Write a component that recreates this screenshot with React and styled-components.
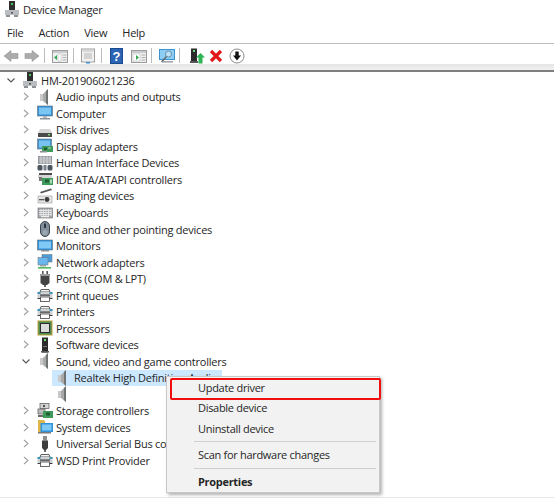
import React from 'react';
import styled, { createGlobalStyle } from 'styled-components';

const GlobalStyle = createGlobalStyle`
  html, body { margin: 0; padding: 0; background: #fff; }
  body { font-family: "Open Sans", "Noto Sans", "Liberation Sans", sans-serif; color: #262626; }
`;

const Window = styled.div`
  position: relative;
  width: 554px;
  height: 499px;
  overflow: hidden;
  background: #fff;
`;
const TitleBar = styled.div`
  height: 18px;
  display: flex;
  align-items: center;
  padding-left: 4px;
  font-size: 11.2px;
  letter-spacing: -0.3px;
`;
const MenuBar = styled.div`
  height: 21px;
  padding-top: 4px;
  display: flex;
  align-items: center;
  padding-left: 7px;
  gap: 15px;
  font-size: 11px;
  letter-spacing: -0.25px;
  border-bottom: 1px solid #bdbdbd;
`;
const Toolbar = styled.div`
  height: 20px;
  display: flex;
  align-items: center;
  padding-top: 3px;
  box-sizing: border-box;
`;
const ToolButton = styled.div`
  width: ${p => p.$w || 21}px;
  margin-left: ${p => p.$ml || 0}px;
  display: flex;
  justify-content: center;
  flex: none;
`;
const ToolSep = styled.div`
  width: 1px;
  height: 15px;
  background: #bcbcbc;
  margin-left: ${p => p.$ml || 0}px;
  flex: none;
`;
const ToolShade = styled.div`
  height: 6px;
  background: linear-gradient(#e4e4e4, #f2f2f2);
  border-bottom: 2px solid #7f7f7f;
`;
const Row = styled.div`
  height: 16.545px;
  display: flex;
  align-items: center;
  padding-left: ${p => p.$indent}px;
  font-size: 11px;
  letter-spacing: -0.23px;
  white-space: nowrap;
`;
const Chevron = styled.svg`
  width: 8px;
  height: 9px;
  margin-right: 7px;
  flex: none;
`;
const IconSlot = styled.span`
  width: 16px;
  height: 16px;
  margin-right: 3px;
  flex: none;
  display: block;
  svg { display: block; }
`;
const SelectedRow = styled(Row)`
  position: relative;
  &::before {
    content: "";
    position: absolute;
    left: 52px;
    width: 170px;
    top: 0;
    bottom: 0;
    background: #cce8ff;
  }
  & > * { position: relative; }
`;
const BottomEdge = styled.div`
  position: absolute;
  left: 0;
  right: 0;
  bottom: 1px;
  height: 1px;
  background: #e6e6e6;
`;
const ContextMenu = styled.div`
  position: absolute;
  left: 166px;
  top: 376px;
  width: 214px;
  height: 117px;
  box-sizing: border-box;
  background: #f2f2f2;
  border: 1px solid #c8c8c8;
  box-shadow: 2px 2px 3px rgba(0, 0, 0, 0.3);
  font-size: 11px;
  letter-spacing: -0.3px;
`;
const MenuItem = styled.div`
  height: ${p => p.$h || 20.5}px;
  display: flex;
  align-items: center;
  padding-left: 31px;
  font-weight: ${p => (p.$bold ? 700 : 400)};
`;
const MenuSep = styled.div`
  height: 1px;
  margin: ${p => p.$m};
  background: #cfcfcf;
`;
const Highlight = styled.div`
  position: absolute;
  left: 3px;
  top: 1px;
  width: 211px;
  height: 22px;
  box-sizing: border-box;
  border: 2px solid #f00f0f;
  border-radius: 2px;
`;

const Svg = ({ children, w = 16, h = 16 }) => (
  <svg width={w} height={h} viewBox={`0 0 ${w} ${h}`}>{children}</svg>
);

const icons = {
  manager: (
    <Svg>
      <rect x="5" y="0" width="6" height="9" fill="#2f2f2f" />
      <rect x="7" y="2" width="2" height="2" fill="#45c45a" />
      <rect x="1" y="9" width="14" height="5" fill="#b9bcc0" />
      <rect x="2" y="14" width="4" height="2" fill="#8d9094" />
      <rect x="10" y="14" width="4" height="2" fill="#8d9094" />
      <rect x="7" y="11" width="2" height="1.5" fill="#555" />
    </Svg>
  ),
  audio: (
    <Svg>
      <rect x="3" y="5" width="3" height="7" fill="#c9c9c9" />
      <path d="M6 5 L11 0 V16 L6 12 Z" fill="#a9a9a9" />
      <path d="M9 2 L11 0 V16 L9 14 Z" fill="#6f7374" />
    </Svg>
  ),
  computer: (
    <Svg>
      <rect x="0.5" y="1" width="15" height="10" fill="#2f8fd8" stroke="#6a6f74" strokeWidth="0.6" />
      <rect x="2" y="2.5" width="12" height="7" fill="#7cc6f4" />
      <rect x="6" y="11" width="4" height="2" fill="#b5b8bb" />
      <rect x="3" y="13" width="10" height="1.5" fill="#8e9195" />
    </Svg>
  ),
  disk: (
    <Svg>
      <path d="M3 7 H13 L15 11 H1 Z" fill="#d4d4d4" />
      <rect x="1" y="11" width="14" height="4" fill="#4a4a4a" />
      <rect x="11" y="12" width="2" height="1.5" fill="#7bd67f" />
    </Svg>
  ),
  display: (
    <Svg>
      <rect x="0.5" y="1" width="14" height="10" fill="#3c95d8" stroke="#6a6f74" strokeWidth="0.6" />
      <rect x="2" y="2.5" width="11" height="7" fill="#79c2ef" />
      <rect x="5" y="8" width="11" height="6" fill="#3f9a5b" />
      <rect x="7" y="9.5" width="3" height="2.5" fill="#1e5f34" />
      <rect x="11" y="9.5" width="3" height="1" fill="#a9dcb5" />
      <rect x="3" y="13" width="7" height="1.5" fill="#8e9195" />
    </Svg>
  ),
  hid: (
    <Svg>
      <rect x="1" y="1" width="14" height="8" fill="#8f959b" />
      <path d="M2 3h12M2 5h12M2 7h12M4 1v8M7 1v8M10 1v8M13 1v8" stroke="#e8e8e8" strokeWidth="0.7" />
      <rect x="0.5" y="10" width="5" height="5.5" rx="1.5" fill="#4c5660" />
      <rect x="10.5" y="10" width="5" height="5.5" rx="1.5" fill="#4c5660" />
      <rect x="6.5" y="10" width="3" height="5.5" fill="#7b8289" />
    </Svg>
  ),
  ide: (
    <Svg>
      <rect x="2" y="2" width="13" height="5" fill="#4d4d4d" />
      <rect x="1" y="4" width="14" height="3" fill="#d5d5d5" />
      <rect x="5" y="7" width="11" height="7" fill="#3f9a5b" />
      <rect x="8" y="8.5" width="4" height="3" fill="#1e5f34" />
      <rect x="13" y="8.5" width="2" height="4" fill="#a9dcb5" />
      <rect x="2" y="6" width="3" height="4" fill="#777" />
    </Svg>
  ),
  imaging: (
    <Svg>
      <path d="M3 4 L14 0.5 L15 2 L4 5.5 Z" fill="#555" />
      <rect x="1" y="8" width="14" height="7" fill="#e4e4e4" stroke="#9a9a9a" strokeWidth="0.6" />
      <circle cx="10" cy="11.5" r="2.4" fill="#3a3a3a" />
      <rect x="2" y="11" width="5" height="1.3" fill="#555" />
    </Svg>
  ),
  keyboard: (
    <Svg>
      <rect x="1" y="3" width="14.5" height="10" fill="#a5a9ad" stroke="#6c6c6c" strokeWidth="0.6" />
      <path d="M2 5.5h12.5M2 7.5h12.5M2 9.5h12.5M4 4v7M6.5 4v7M9 4v7M11.5 4v7M14 4v7" stroke="#ededed" strokeWidth="0.8" />
      <rect x="4" y="10.8" width="8" height="1.4" fill="#eee" />
    </Svg>
  ),
  mouse: (
    <Svg>
      <rect x="3.5" y="0.5" width="9" height="15" rx="4.5" fill="#7f8e9a" stroke="#3f474e" />
      <rect x="7" y="2.5" width="2" height="4.5" fill="#2f383f" />
      <rect x="5.5" y="9" width="5" height="5" rx="2" fill="#9aa8b2" />
    </Svg>
  ),
  monitor: (
    <Svg>
      <rect x="0.5" y="2" width="15" height="10" fill="#2f8fd8" stroke="#6a6f74" strokeWidth="0.6" />
      <rect x="2" y="3.5" width="12" height="7" fill="#82caf6" />
      <rect x="4" y="12" width="8" height="1.5" fill="#8e9195" />
    </Svg>
  ),
  network: (
    <Svg>
      <rect x="5" y="0.5" width="10" height="7.5" fill="#4c9edb" stroke="#6a6f74" strokeWidth="0.5" />
      <rect x="1" y="3.5" width="10" height="7.5" fill="#69b7ec" stroke="#6a6f74" strokeWidth="0.5" />
      <rect x="3" y="11" width="6" height="1.5" fill="#9ea2a6" />
      <rect x="1" y="13" width="13" height="1.6" fill="#53b85f" />
    </Svg>
  ),
  ports: (
    <Svg>
      <rect x="5" y="0" width="1.6" height="3" fill="#555" />
      <rect x="9.4" y="0" width="1.6" height="3" fill="#555" />
      <rect x="3" y="3" width="10" height="2" fill="#9a9a9a" />
      <path d="M3.5 5 H12.5 V12 L10 14 H6 L3.5 12 Z" fill="#444" />
      <rect x="7" y="14" width="2" height="2" fill="#666" />
    </Svg>
  ),
  printer: (
    <Svg>
      <path d="M4 2.5 H12 L13 5 H3 Z" fill="#f4f4f4" stroke="#3b3b3b" strokeWidth="0.8" />
      <rect x="0.5" y="5" width="15" height="6" fill="#cfd3d6" />
      <rect x="0.5" y="5" width="3" height="2" fill="#3f95b5" />
      <rect x="12.5" y="5" width="3" height="2" fill="#3f95b5" />
      <rect x="3" y="7.5" width="10" height="1.2" fill="#3c3c3c" />
      <rect x="0.5" y="11" width="15" height="1" fill="#3c3c3c" />
      <rect x="3.5" y="10" width="9" height="4.5" fill="#fff" stroke="#444" strokeWidth="0.8" />
    </Svg>
  ),
  processor: (
    <Svg>
      <rect x="1" y="1" width="14" height="14" fill="#4f8a52" stroke="#b8a33c" strokeWidth="1" />
      <rect x="3.5" y="3.5" width="9" height="9" fill="#dcdcdc" stroke="#2d2d2d" strokeWidth="1" />
    </Svg>
  ),
  software: (
    <Svg>
      <rect x="5" y="0.5" width="6" height="15" fill="#2b2b2b" />
      <rect x="7" y="2" width="2" height="2" fill="#6fdc7a" />
      <rect x="6" y="9" width="4" height="1" fill="#777" />
      <rect x="4" y="14" width="8" height="1.5" fill="#555" />
    </Svg>
  ),
  storage: (
    <Svg>
      <rect x="3" y="0.5" width="9" height="5" fill="#d5d5d5" stroke="#555" strokeWidth="0.7" />
      <circle cx="7" cy="3" r="1.2" fill="#555" />
      <rect x="1" y="6" width="7" height="5" fill="#bcbcbc" stroke="#555" strokeWidth="0.7" />
      <rect x="6" y="8" width="10" height="7" fill="#3f9a5b" />
      <rect x="9" y="9.5" width="4" height="3" fill="#1e5f34" />
      <rect x="1" y="12" width="5" height="2" fill="#6b6b6b" />
    </Svg>
  ),
  system: (
    <Svg>
      <path d="M1 1 H7 L8.5 3 H8 V14 H1 Z" fill="#e0b64a" />
      <rect x="3.5" y="4" width="12.5" height="9" fill="#2f93dc" />
      <rect x="5" y="5.5" width="9.5" height="6" fill="#7dc8f5" />
      <rect x="1" y="13" width="13" height="1.5" fill="#77797c" />
    </Svg>
  ),
  usb: (
    <Svg>
      <rect x="6" y="0" width="4" height="4.5" fill="#8f8f8f" />
      <path d="M5 4.5 H11 V12 L9 14 H7 L5 12 Z" fill="#3d3d3d" />
      <rect x="7.2" y="14" width="1.6" height="2" fill="#444" />
    </Svg>
  ),
  back: (
    <Svg>
      <path d="M1 8 L8 2.5 V5.5 H15 V10.5 H8 V13.5 Z" fill="#ababab" stroke="#949494" strokeWidth="0.6" />
    </Svg>
  ),
  forward: (
    <Svg>
      <path d="M15 8 L8 2.5 V5.5 H1 V10.5 H8 V13.5 Z" fill="#ababab" stroke="#949494" strokeWidth="0.6" />
    </Svg>
  ),
  tree: (
    <Svg>
      <rect x="0.5" y="2.5" width="15" height="12" fill="#eef0f1" stroke="#9c9c9c" />
      <rect x="1" y="3" width="14" height="2" fill="#c8cbce" />
      <rect x="6" y="6" width="3" height="7" fill="#fff" stroke="#b5b5b5" strokeWidth="0.5" />
      <path d="M2 9.5 L5 7 V12 Z" fill="#2fa84f" />
      <rect x="10.5" y="6.5" width="4" height="1" fill="#b0b0b0" />
      <rect x="10.5" y="9" width="4" height="1" fill="#b0b0b0" />
      <rect x="10.5" y="11.5" width="4" height="1" fill="#b0b0b0" />
    </Svg>
  ),
  props: (
    <Svg>
      <rect x="1.5" y="1" width="13" height="13" fill="#f1f1f1" stroke="#9f9f9f" />
      <rect x="2.5" y="2" width="11" height="2" fill="#d8d8d8" />
      <path d="M4 6h8M4 8h8M4 10h8" stroke="#b4b4b4" />
      <rect x="6" y="14" width="4" height="1.5" fill="#3e8fd0" />
    </Svg>
  ),
  help: (
    <svg width="16" height="16" viewBox="0 0 16 16">
      <rect x="1.5" y="0.5" width="12" height="15" fill="#2b63b5" stroke="#1b4a8c" />
      <text x="7.5" y="13" textAnchor="middle" fontFamily="Liberation Sans" fontWeight="700" fontSize="13" fill="#fff">?</text>
    </svg>
  ),
  panel: (
    <Svg>
      <rect x="0.5" y="2.5" width="15" height="12" fill="#eef0f1" stroke="#9c9c9c" />
      <rect x="1" y="3" width="14" height="2" fill="#c8cbce" />
      <rect x="2" y="6" width="7" height="7" fill="#fff" stroke="#b5b5b5" strokeWidth="0.5" />
      <path d="M5 7 L8 9.5 L5 12 Z" fill="#2fa84f" />
      <rect x="10.5" y="6.5" width="4" height="1" fill="#b0b0b0" />
      <rect x="10.5" y="9" width="4" height="1" fill="#b0b0b0" />
      <rect x="10.5" y="11.5" width="4" height="1" fill="#b0b0b0" />
    </Svg>
  ),
  scan: (
    <Svg>
      <rect x="0.5" y="1.5" width="15" height="10" fill="#8ccdf3" stroke="#3c93cf" />
      <circle cx="9.5" cy="6" r="3" fill="#bfe4fa" stroke="#6a8fa8" />
      <path d="M7.5 8.5 L2.5 14" stroke="#5f6468" strokeWidth="1.4" />
      <rect x="3" y="13.2" width="11" height="1.3" fill="#8e9195" />
    </Svg>
  ),
  driver: (
    <Svg>
      <rect x="2" y="0.5" width="6" height="13" fill="#2b2b2b" />
      <rect x="4" y="2" width="2" height="2" fill="#6fdc7a" />
      <rect x="1" y="13" width="8" height="2" fill="#555" />
      <path d="M11.5 5 L16 9.5 H13.5 V15.5 H9.5 V9.5 H7 Z" fill="#2fb455" />
    </Svg>
  ),
  remove: (
    <Svg>
      <path d="M3 3 L13 13 M13 3 L3 13" stroke="#e01a1a" strokeWidth="3.2" />
    </Svg>
  ),
  rollback: (
    <Svg>
      <circle cx="8" cy="8" r="7" fill="#fff" stroke="#8c8c8c" />
      <path d="M6.3 3.5 H9.7 V7.5 H12 L8 12.5 L4 7.5 H6.3 Z" fill="#111" />
    </Svg>
  ),
};

const Arrow = ({ open }) => (
  <Chevron viewBox="0 0 8 9">
    {open ? (
      <path d="M0.5 2.5 L4 6 L7.5 2.5" fill="none" stroke="#555" strokeWidth="1.1" />
    ) : (
      <path d="M2 1 L6 4.5 L2 8" fill="none" stroke="#a0a0a0" strokeWidth="1.1" />
    )}
  </Chevron>
);

const groupsBefore = [
  ['audio', 'Audio inputs and outputs'],
  ['computer', 'Computer'],
  ['disk', 'Disk drives'],
  ['display', 'Display adapters'],
  ['hid', 'Human Interface Devices'],
  ['ide', 'IDE ATA/ATAPI controllers'],
  ['imaging', 'Imaging devices'],
  ['keyboard', 'Keyboards'],
  ['mouse', 'Mice and other pointing devices'],
  ['monitor', 'Monitors'],
  ['network', 'Network adapters'],
  ['ports', 'Ports (COM & LPT)'],
  ['printer', 'Print queues'],
  ['printer', 'Printers'],
  ['processor', 'Processors'],
  ['software', 'Software devices'],
];

const groupsAfter = [
  ['storage', 'Storage controllers'],
  ['system', 'System devices'],
  ['usb', 'Universal Serial Bus controllers'],
  ['printer', 'WSD Print Provider'],
];

const TreeRow = ({ icon, label, open, indent = 22 }) => (
  <Row $indent={indent}>
    <Arrow open={open} />
    <IconSlot>{icons[icon]}</IconSlot>
    {label}
  </Row>
);

const App = () => (
  <Window>
    <GlobalStyle />
    <TitleBar>
      <IconSlot>{icons.manager}</IconSlot>
      Device Manager
    </TitleBar>
    <MenuBar>
      <span>File</span>
      <span>Action</span>
      <span>View</span>
      <span>Help</span>
    </MenuBar>
    <Toolbar>
      <ToolButton>{icons.back}</ToolButton>
      <ToolButton>{icons.forward}</ToolButton>
      <ToolSep $ml={2} />
      <ToolButton $ml={4}>{icons.tree}</ToolButton>
      <ToolSep $ml={3} />
      <ToolButton $ml={3}>{icons.props}</ToolButton>
      <ToolSep $ml={3} />
      <ToolButton $ml={4}>{icons.help}</ToolButton>
      <ToolButton $ml={1}>{icons.panel}</ToolButton>
      <ToolSep $ml={2} />
      <ToolButton $ml={4}>{icons.scan}</ToolButton>
      <ToolSep $ml={2} />
      <ToolButton $ml={7} $w={19}>{icons.driver}</ToolButton>
      <ToolButton $w={19}>{icons.remove}</ToolButton>
      <ToolButton $w={24}>{icons.rollback}</ToolButton>
    </Toolbar>
    <ToolShade />
    <div>
      <TreeRow icon="manager" label="HM-201906021236" open indent={7} />
      {groupsBefore.map(([icon, label]) => (
        <TreeRow key={label} icon={icon} label={label} />
      ))}
      <TreeRow icon="audio" label="Sound, video and game controllers" open />
      <SelectedRow $indent={55}>
        <IconSlot>{icons.audio}</IconSlot>
        <span>Realtek High Definition Audio</span>
      </SelectedRow>
      <Row $indent={55}>
        <IconSlot>{icons.audio}</IconSlot>
      </Row>
      {groupsAfter.map(([icon, label]) => (
        <TreeRow key={label} icon={icon} label={label} />
      ))}
    </div>
    <BottomEdge />
    <ContextMenu>
      <Highlight />
      <MenuItem>Update driver</MenuItem>
      <MenuItem>Disable device</MenuItem>
      <MenuItem>Uninstall device</MenuItem>
      <MenuSep $m="2.5px 3px 3px 27px" />
      <MenuItem $h={19}>Scan for hardware changes</MenuItem>
      <MenuSep $m="4px 3px 3px 27px" />
      <MenuItem $h={18} $bold>Properties</MenuItem>
    </ContextMenu>
  </Window>
);

export default App;
